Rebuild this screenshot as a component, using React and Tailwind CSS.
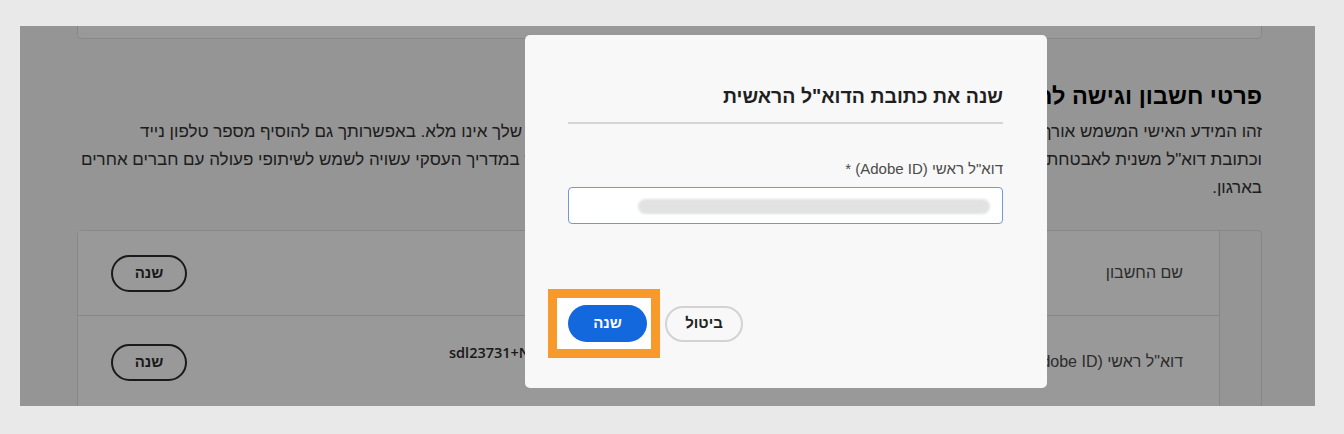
export default function App() {
  return (
    <div className="h-[434px] w-[1344px] bg-[#e9e9e9] pl-[20px] pt-[26px] font-['Liberation_Sans','Open_Sans',sans-serif]">
      <div dir="rtl" className="relative h-[380px] w-[1295px] overflow-hidden bg-[#f8f8f8] text-[#323232]">
        <div className="ml-[57px] mr-[53px]">
          <div className="-mt-[40px] h-[53px] rounded-[4px] border border-[#e1e1e1] bg-white" />

          <h1 className="mt-[42px] text-[23.5px] font-bold leading-[30px] text-black">פרטי חשבון וגישה לחשבון</h1>

          <div className="mt-[7px] text-[17px] leading-[28px]">
            <div className="flex justify-between whitespace-nowrap">
              <span>זהו המידע האישי המשמש אורך להתחברות לחשבון.</span>
              <span className="ml-[63px]">ייתכן שהפרופיל שלך אינו מלא. באפשרותך גם להוסיף מספר טלפון נייד</span>
            </div>
            <div className="flex justify-between whitespace-nowrap">
              <span>וכתובת דוא"ל משנית לאבטחת החשבון.</span>
              <span className="ml-[4px]">הכתובת שלך במדריך העסקי עשויה לשמש לשיתופי פעולה עם חברים אחרים</span>
            </div>
            <div>בארגון.</div>
          </div>

          <div className="mt-[28px] rounded-[4px] border border-[#e1e1e1] bg-[#f8f8f8] pr-[41px]">
            <div className="border-r border-[#e1e1e1] bg-white">
              <div className="flex h-[85px] items-center border-b border-[#e1e1e1] pl-[33px] pr-[36px]">
                <div className="w-[300px] text-[16px] text-[#4b4b4b]">שם החשבון</div>
                <div className="w-[434px]" />
                <div className="flex-1" />
                <button className="h-[37px] w-[76px] rounded-full border-2 border-[#2c2c2c] text-[15px] font-bold text-[#2c2c2c]">שנה</button>
              </div>
              <div className="flex h-[92px] items-center pl-[33px] pr-[36px]">
                <div className="w-[300px] text-[16px] text-[#4b4b4b]">דוא"ל ראשי (Adobe ID)</div>
                <div dir="ltr" className="mb-[18px] w-[434px] text-left font-['Open_Sans',sans-serif] text-[14.5px] font-semibold text-[#2c2c2c]">sdl23731+NOREPLY@adobetest.com</div>
                <div className="flex-1" />
                <button className="h-[37px] w-[76px] rounded-full border-2 border-[#2c2c2c] text-[15px] font-bold text-[#2c2c2c]">שנה</button>
              </div>
            </div>
          </div>
        </div>

        <div className="absolute inset-0 bg-black/40" />

        <div className="absolute left-[505px] top-[9px] h-[353px] w-[522px] rounded-[5px] bg-[#f8f8f8] pl-[43px] pr-[44px] pt-[47px]">
          <h2 className="text-[19.5px] font-bold leading-[28px] text-[#1f1f1f]">שנה את כתובת הדוא"ל הראשית</h2>
          <div className="mt-[12px] h-[2px] bg-[#d5d5d5]" />
          <label className="mt-[35px] block text-[15px] leading-[20px] text-[#4b4b4b]">דוא"ל ראשי (Adobe ID) *</label>
          <div className="mt-[8px] h-[37px] rounded-[4px] border border-[#7299d3] bg-white pr-[12px] pt-[11px]">
            <div className="h-[15px] w-[352px] rounded-full bg-[#e2e2e2] blur-[1px]" />
          </div>
          <div className="mt-[81px] flex items-center justify-end gap-[18px]">
            <button className="h-[36px] w-[78px] rounded-full border-2 border-[#d3d3d3] text-[15px] font-bold text-[#222]">ביטול</button>
            <div className="relative">
              <span className="absolute -bottom-[16px] -left-[20px] -right-[13px] -top-[16px] border-[9px] border-[#f7992b] bg-white" />
              <button className="relative h-[37px] w-[79px] rounded-full bg-[#1268dc] text-[15px] font-bold text-white">שנה</button>
            </div>
          </div>
        </div>
      </div>
    </div>
  );
}
